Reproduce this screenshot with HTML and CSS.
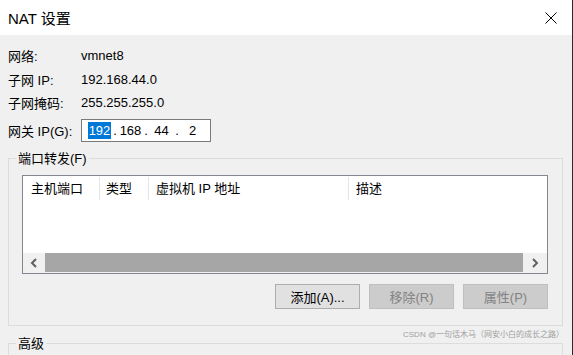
FILE: index.html
```html
<!DOCTYPE html>
<html lang="zh-CN">
<head>
    <meta charset="UTF-8">
    <title>NAT 设置</title>
    <link rel="stylesheet" href="styles.css">
</head>
<body>
    <div class="window">
        <div class="titlebar">
            <span class="title">NAT 设置</span>
            <svg class="close" width="12" height="12" viewBox="0 0 12 12">
                <path d="M0.5 0.5 L11.5 11.5 M11.5 0.5 L0.5 11.5" stroke="#000" stroke-width="1" fill="none"/>
            </svg>
        </div>

        <div class="content">
            <div class="info">
                <span>网络:</span><span>vmnet8</span>
                <span>子网 IP:</span><span>192.168.44.0</span>
                <span>子网掩码:</span><span>255.255.255.0</span>
            </div>

            <div class="gateway">
                <label>网关 IP(G):</label>
                <div class="ipbox">
                    <span class="field selected">192</span><span class="dot">.</span>
                    <span class="field">168</span><span class="dot">.</span>
                    <span class="field">44</span><span class="dot">.</span>
                    <span class="field">2</span>
                </div>
            </div>

            <fieldset class="group forward">
                <legend>端口转发(F)</legend>
                <div class="listview">
                    <div class="lv-head">
                        <div class="col">主机端口</div>
                        <div class="col">类型</div>
                        <div class="col">虚拟机 IP 地址</div>
                        <div class="col last">描述</div>
                    </div>
                    <div class="lv-body"></div>
                    <div class="hscroll">
                        <span class="arrow">
                            <svg width="8" height="10" viewBox="0 0 8 10"><path d="M6 1 L2 5 L6 9" stroke="#606060" stroke-width="2" fill="none"/></svg>
                        </span>
                        <span class="thumb"></span>
                        <span class="arrow">
                            <svg width="8" height="10" viewBox="0 0 8 10"><path d="M2 1 L6 5 L2 9" stroke="#606060" stroke-width="2" fill="none"/></svg>
                        </span>
                    </div>
                </div>
                <div class="buttons">
                    <button class="btn">添加(A)...</button>
                    <button class="btn" disabled>移除(R)</button>
                    <button class="btn" disabled>属性(P)</button>
                </div>
            </fieldset>

            <fieldset class="group advanced">
                <legend>高级</legend>
            </fieldset>
        </div>

        <div class="watermark">CSDN @一句话木马（网安小白的成长之路）</div>
    </div>
</body>
</html>
```

FILE: styles.css
```css
body {
    margin: 0;
    background: #2b2b2b;
    color: #000;
    font-family: "Liberation Sans", "Noto Sans CJK SC", sans-serif;
    font-size: 13px;
}
.window {
    position: relative;
    width: 572px;
    height: 355px;
    background: #f0f0f0;
    overflow: hidden;
}
.titlebar {
    height: 35px;
    background: #fff;
    display: flex;
    align-items: center;
    justify-content: space-between;
    padding: 0 15px 0 8px;
}
.title {
    font-size: 15px;
}
.close {
    display: block;
}
.content {
    padding: 9px 9px 0 8px;
}
.info {
    display: grid;
    grid-template-columns: 73px 1fr;
    grid-auto-rows: 23.5px;
    align-items: center;
}
.gateway {
    display: flex;
    align-items: center;
    margin-top: 4px;
}
.gateway label {
    width: 73px;
}
.ipbox {
    width: 130px;
    height: 23px;
    box-sizing: border-box;
    border: 1px solid #7a7a7a;
    background: #fff;
    display: flex;
    align-items: center;
    padding-left: 6px;
}
.field {
    width: 23px;
    text-align: center;
    line-height: 17px;
}
.field.selected {
    background: #0078d7;
    color: #fff;
}
.dot {
    width: 8px;
    text-align: center;
    line-height: 17px;
}
.group {
    margin: 9px 0 0 0;
    border: 1px solid #dcdcdc;
    min-width: 0;
}
.group legend {
    line-height: 16px;
    padding: 0 2px;
    margin-left: -6px;
}
.forward {
    padding: 8px 14px 16px 13px;
}
.advanced {
    height: 40px;
    margin-top: 10px;
    padding: 0 14px 0 13px;
}
.listview {
    border: 1px solid #828790;
    background: #fff;
}
.lv-head {
    display: grid;
    grid-template-columns: 77px 49px 200px 1fr;
    height: 26px;
}
.lv-head .col {
    margin: 1px 0 2px;
    border-right: 1px solid #e5e5e5;
    padding-left: 7px;
    line-height: 23px;
    white-space: nowrap;
}
.lv-head .col:first-child {
    padding-left: 8px;
}
.lv-head .col:nth-child(2) {
    padding-left: 6px;
}
.lv-head .col.last {
    border-right: none;
}
.lv-body {
    height: 51px;
}
.hscroll {
    display: flex;
    height: 20px;
    background: #f0f0f0;
}
.arrow {
    width: 22px;
    display: flex;
    align-items: center;
    justify-content: center;
}
.arrow:last-child {
    width: 24px;
}
.thumb {
    flex: 1;
    background: #a6a6a6;
    margin: 0 0 1px;
}
.buttons {
    display: flex;
    justify-content: flex-end;
    gap: 9px;
    margin-top: 10px;
}
.btn {
    width: 85px;
    height: 25px;
    font: inherit;
    background: #e1e1e1;
    border: 1px solid #adadad;
    color: #000;
    padding: 0;
}
.btn:disabled {
    background: #cccccc;
    border-color: #bfbfbf;
    color: #838383;
}
.watermark {
    position: absolute;
    right: 8px;
    top: 328px;
    font-size: 8px;
    color: #a0a0a0;
    white-space: nowrap;
}
```
